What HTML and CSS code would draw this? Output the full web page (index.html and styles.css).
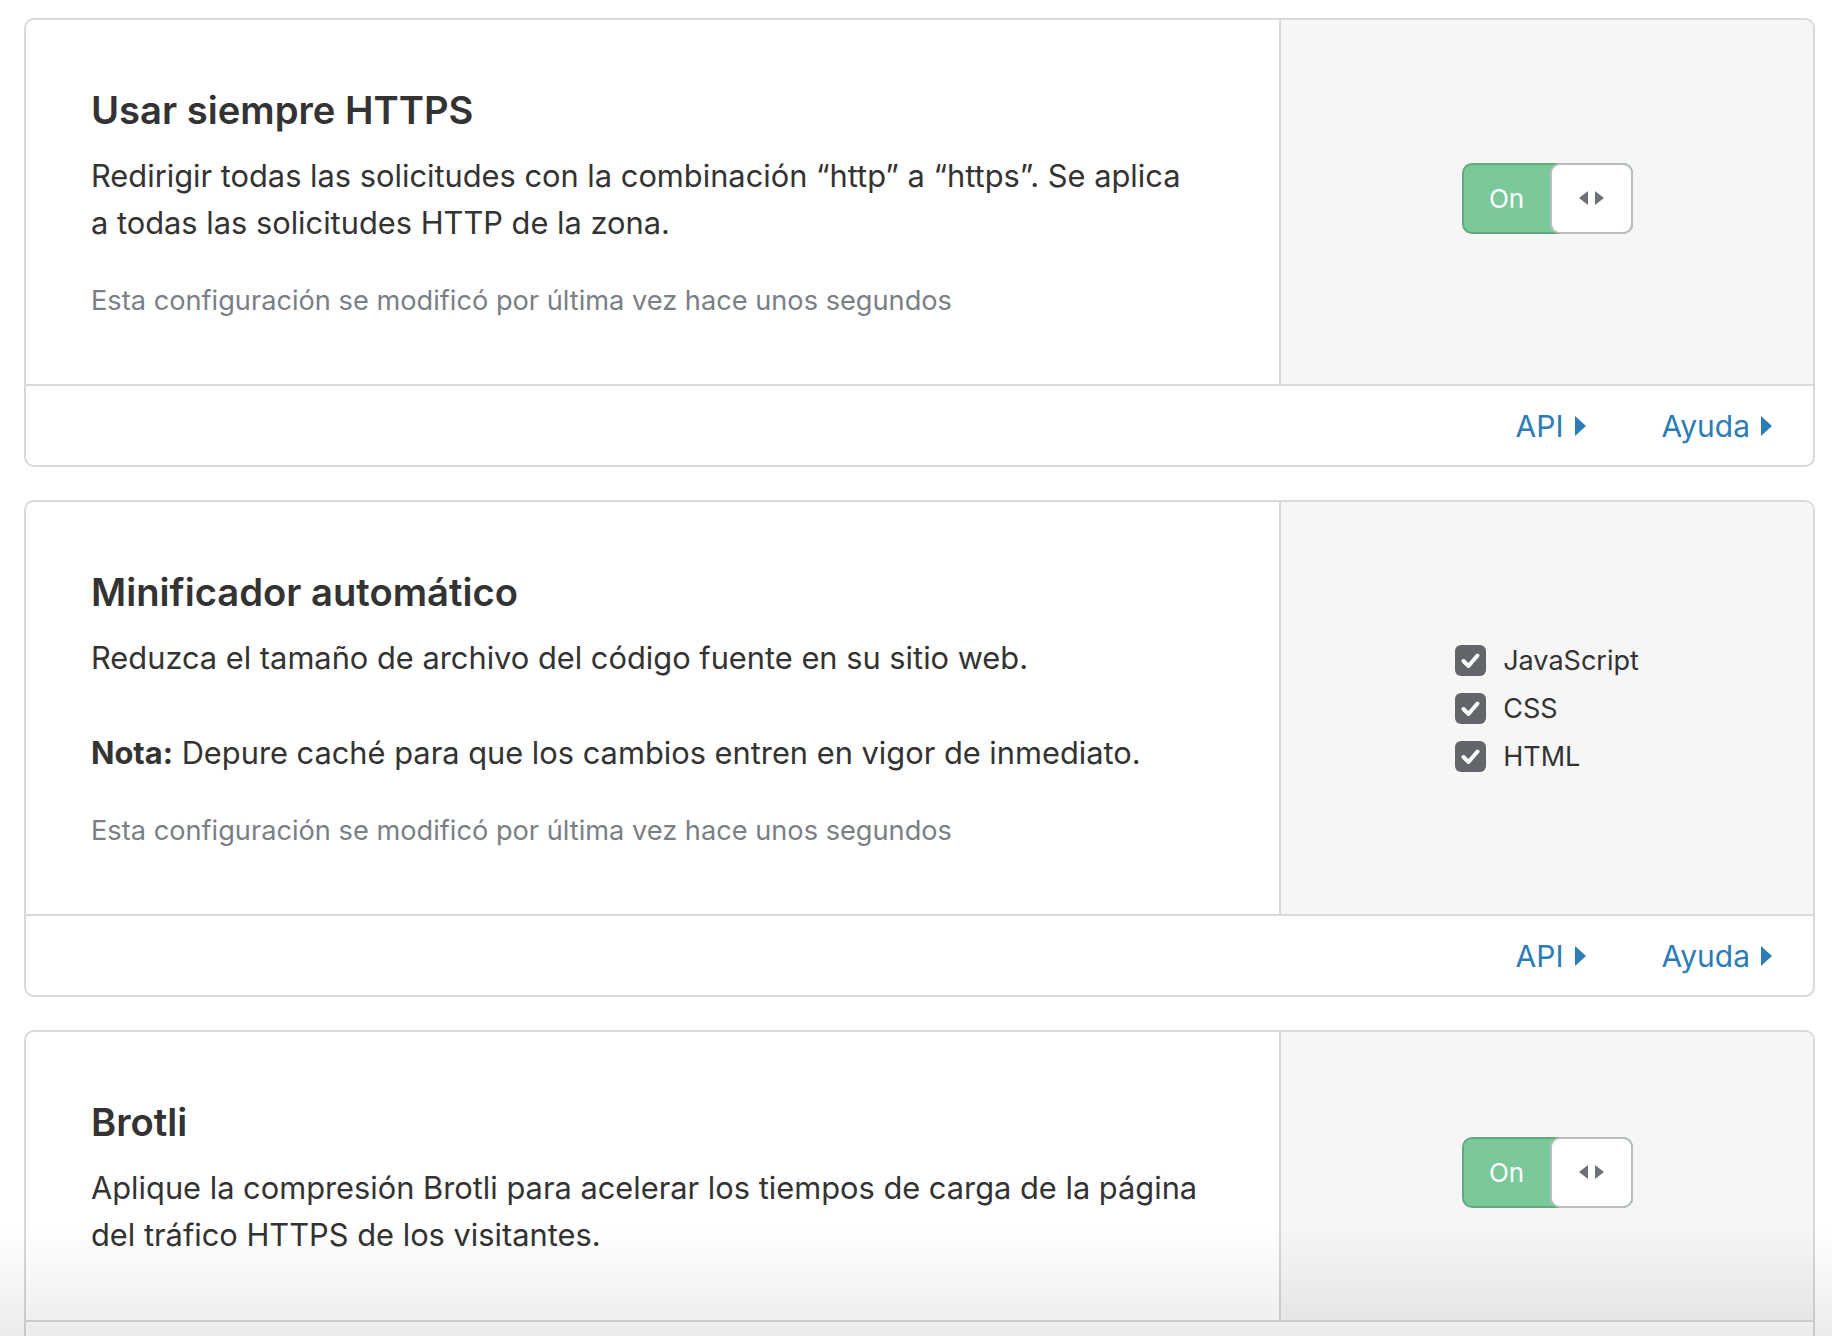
FILE: index.html
```html
<!DOCTYPE html>
<html lang="es">
<head>
<meta charset="utf-8">
<title>Configuración</title>
<link rel="stylesheet" href="styles.css">
</head>
<body>
<main class="settings">

  <section class="card">
    <div class="card-body">
      <div class="card-main">
        <h3 class="card-title">Usar siempre HTTPS</h3>
        <p class="card-desc">Redirigir todas las solicitudes con la combinación “http” a “https”. Se aplica a todas las solicitudes HTTP de la zona.</p>
        <p class="card-meta">Esta configuración se modificó por última vez hace unos segundos</p>
      </div>
      <div class="card-control">
        <div class="toggle">
          <span class="toggle-label">On</span>
          <span class="toggle-knob">
            <svg class="knob-icon" width="25" height="14" viewBox="0 0 25 14"><path d="M0 7 L9 0 L9 14 Z M16 0 L25 7 L16 14 Z" fill="#6d7176"/></svg>
          </span>
        </div>
      </div>
    </div>
    <div class="card-footer">
      <a class="footer-link" href="#">API<svg class="caret" width="11" height="20" viewBox="0 0 11 20"><path d="M0 0 L11 10 L0 20 Z" fill="currentColor"/></svg></a>
      <a class="footer-link" href="#">Ayuda<svg class="caret" width="11" height="20" viewBox="0 0 11 20"><path d="M0 0 L11 10 L0 20 Z" fill="currentColor"/></svg></a>
    </div>
  </section>

  <section class="card">
    <div class="card-body">
      <div class="card-main">
        <h3 class="card-title">Minificador automático</h3>
        <p class="card-desc">Reduzca el tamaño de archivo del código fuente en su sitio web.</p>
        <p class="card-desc card-note"><strong>Nota:</strong> Depure caché para que los cambios entren en vigor de inmediato.</p>
        <p class="card-meta">Esta configuración se modificó por última vez hace unos segundos</p>
      </div>
      <div class="card-control">
        <ul class="checklist">
          <li class="check-item"><span class="check-box"><svg width="31" height="31" viewBox="0 0 31 31"><path d="M8.5 16 L13.5 21 L22.5 10.5" fill="none" stroke="#fff" stroke-width="4" stroke-linecap="round" stroke-linejoin="round"/></svg></span>JavaScript</li>
          <li class="check-item"><span class="check-box"><svg width="31" height="31" viewBox="0 0 31 31"><path d="M8.5 16 L13.5 21 L22.5 10.5" fill="none" stroke="#fff" stroke-width="4" stroke-linecap="round" stroke-linejoin="round"/></svg></span>CSS</li>
          <li class="check-item"><span class="check-box"><svg width="31" height="31" viewBox="0 0 31 31"><path d="M8.5 16 L13.5 21 L22.5 10.5" fill="none" stroke="#fff" stroke-width="4" stroke-linecap="round" stroke-linejoin="round"/></svg></span>HTML</li>
        </ul>
      </div>
    </div>
    <div class="card-footer">
      <a class="footer-link" href="#">API<svg class="caret" width="11" height="20" viewBox="0 0 11 20"><path d="M0 0 L11 10 L0 20 Z" fill="currentColor"/></svg></a>
      <a class="footer-link" href="#">Ayuda<svg class="caret" width="11" height="20" viewBox="0 0 11 20"><path d="M0 0 L11 10 L0 20 Z" fill="currentColor"/></svg></a>
    </div>
  </section>

  <section class="card">
    <div class="card-body">
      <div class="card-main card-main-short">
        <h3 class="card-title">Brotli</h3>
        <p class="card-desc">Aplique la compresión Brotli para acelerar los tiempos de carga de la página del tráfico HTTPS de los visitantes.</p>
      </div>
      <div class="card-control">
        <div class="toggle">
          <span class="toggle-label">On</span>
          <span class="toggle-knob">
            <svg class="knob-icon" width="25" height="14" viewBox="0 0 25 14"><path d="M0 7 L9 0 L9 14 Z M16 0 L25 7 L16 14 Z" fill="#6d7176"/></svg>
          </span>
        </div>
      </div>
    </div>
    <div class="card-footer">
      <a class="footer-link" href="#">API<svg class="caret" width="11" height="20" viewBox="0 0 11 20"><path d="M0 0 L11 10 L0 20 Z" fill="currentColor"/></svg></a>
      <a class="footer-link" href="#">Ayuda<svg class="caret" width="11" height="20" viewBox="0 0 11 20"><path d="M0 0 L11 10 L0 20 Z" fill="currentColor"/></svg></a>
    </div>
  </section>

</main>
<div class="bottom-fade"></div>
</body>
</html>
```

FILE: styles.css
```css
* { box-sizing: border-box; }

html, body {
  margin: 0;
  padding: 0;
  background: #ffffff;
}

body {
  font-family: "Inter", "Roboto", "Liberation Sans", sans-serif;
  color: #333333;
}

.settings {
  display: flex;
  flex-direction: column;
  gap: 33px;
  padding: 18px 17px 40px 24px;
}

.card {
  border: 2px solid #d9d9d9;
  border-radius: 10px;
  overflow: hidden;
  background: #ffffff;
}

.card-body {
  display: grid;
  grid-template-columns: 1fr 534px;
  border-bottom: 2px solid #d9d9d9;
}

.card-main {
  padding: 67px 65px 64px 65px;
}

.card-main-short {
  padding-bottom: 62px;
}

.card-title {
  margin: 0 0 19px 0;
  font-size: 38.2px;
  line-height: 46px;
  font-weight: 600;
  color: #333333;
}

.card-desc {
  margin: 0;
  max-width: 1110px;
  font-size: 30.8px;
  line-height: 47px;
  color: #333333;
}

.card-note {
  margin-top: 48px;
}

.card-note strong {
  font-weight: 700;
}

.card-meta {
  margin: 35px 0 0 0;
  font-size: 27.2px;
  line-height: 39px;
  color: #7a7f86;
}

.card-control {
  background: #f6f6f6;
  border-left: 2px solid #d9d9d9;
  display: flex;
  align-items: center;
  justify-content: center;
}

.toggle {
  display: flex;
  width: 171px;
  height: 71px;
  margin-bottom: 8px;
  border: 2px solid #64a87d;
  border-radius: 10px;
  background: #7bc89b;
}

.toggle-label {
  flex: 1;
  display: flex;
  align-items: center;
  justify-content: center;
  color: #ffffff;
  font-size: 26px;
}

.toggle-knob {
  width: 83px;
  margin: -2px -2px -2px 0;
  background: #ffffff;
  border: 2px solid #b9bdc0;
  border-radius: 10px;
  display: flex;
  align-items: center;
  justify-content: center;
}

.checklist {
  list-style: none;
  margin: 0;
  padding: 0;
  display: flex;
  flex-direction: column;
  gap: 17px;
}

.check-item {
  display: flex;
  align-items: center;
  gap: 17px;
  font-size: 27px;
  line-height: 31px;
  color: #333333;
}

.check-box {
  width: 31px;
  height: 31px;
  border-radius: 6px;
  background: #62666a;
  display: flex;
}

.card-footer {
  height: 79px;
  display: flex;
  align-items: center;
  justify-content: flex-end;
  gap: 76px;
  padding-right: 41px;
}

.footer-link {
  display: flex;
  align-items: center;
  gap: 11px;
  font-size: 30px;
  color: #2c7cb5;
  text-decoration: none;
}

.bottom-fade {
  position: fixed;
  left: 0;
  right: 0;
  bottom: 0;
  height: 110px;
  background: linear-gradient(to bottom, rgba(0,0,0,0), rgba(0,0,0,0.075));
  pointer-events: none;
}
```
